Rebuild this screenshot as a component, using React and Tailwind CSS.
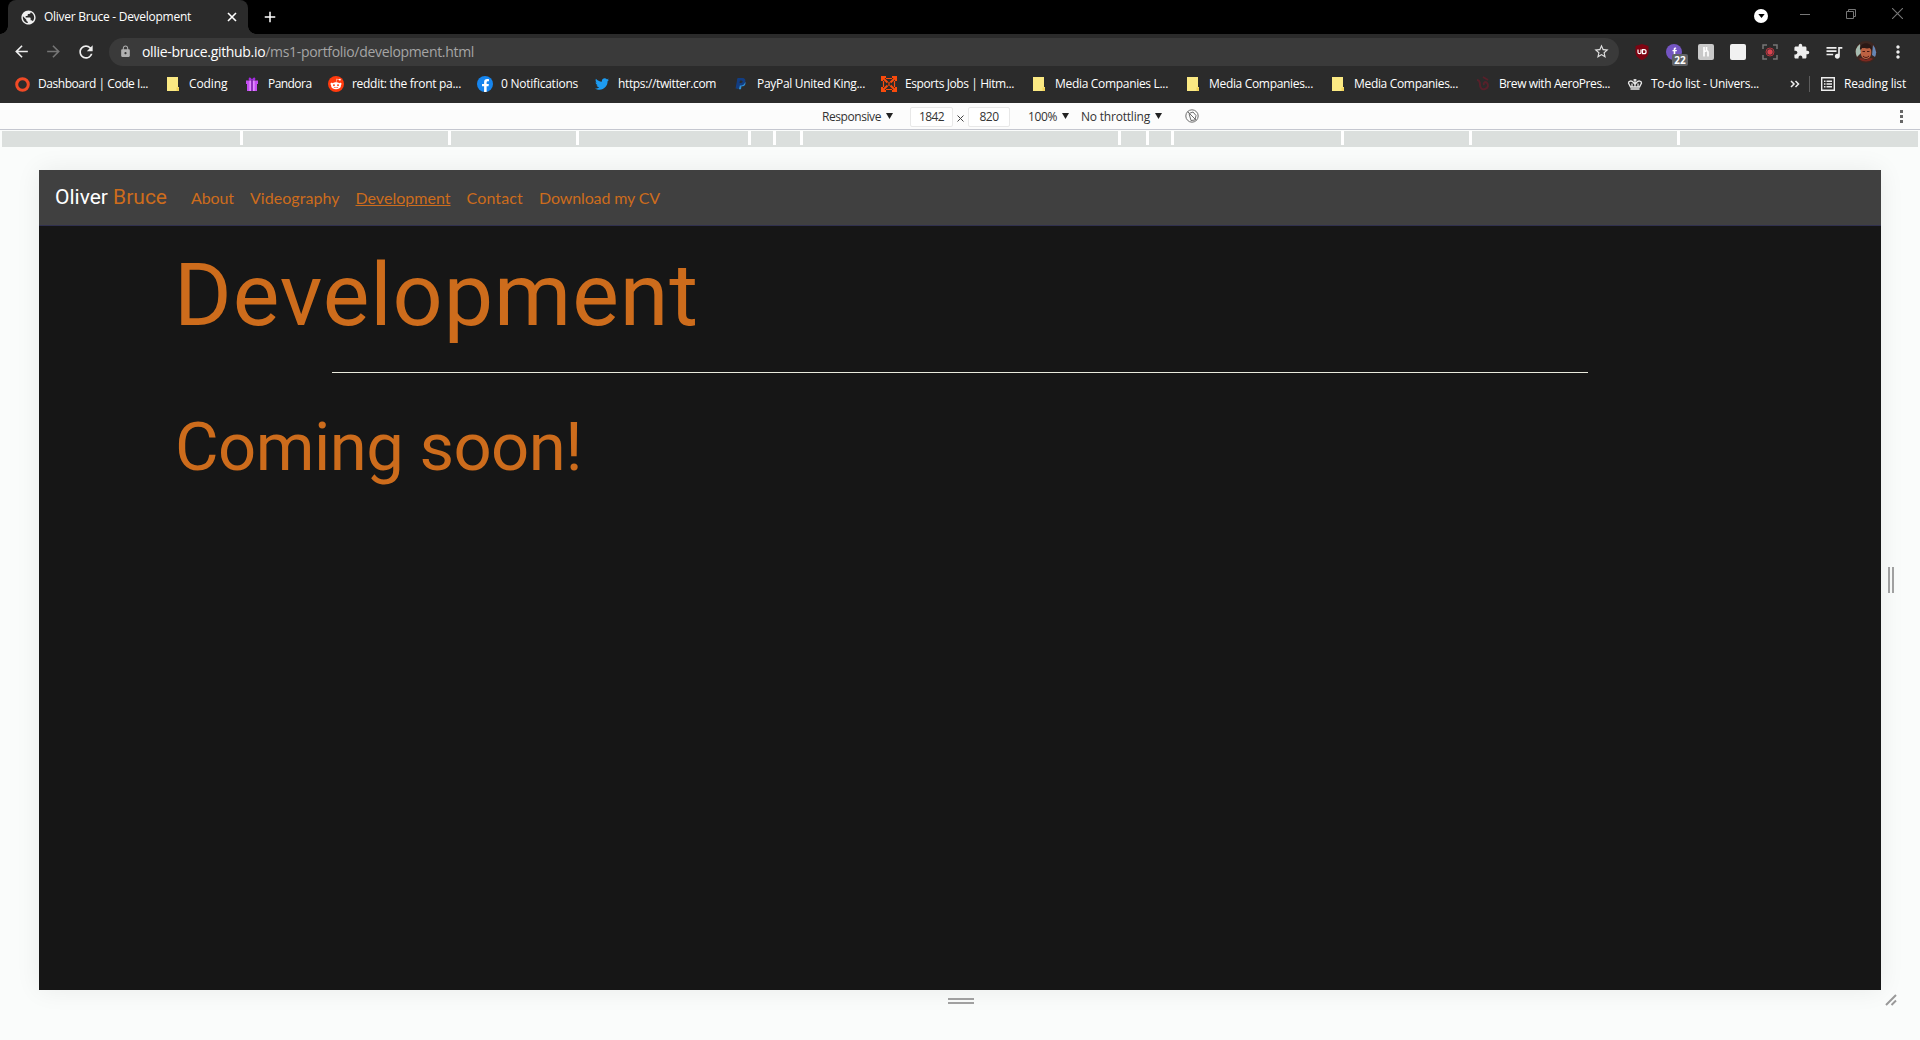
import { useLayoutEffect, useRef, useState } from 'react';
import { MdStarBorder, MdExtension, MdQueueMusic, MdMoreVert, MdArrowBack, MdArrowForward, MdRefresh, MdLock, MdPublic, MdAdd } from 'react-icons/md';
import { FaRedditAlien, FaTwitter, FaPaypal, FaFacebookF } from 'react-icons/fa';

// Text whose tracking is computed so that it fills the given width.
function Fit({ w, className = '', children }) {
  const ref = useRef(null);
  const [spacing, setSpacing] = useState(0);
  useLayoutEffect(() => {
    const measure = () => {
      const el = ref.current;
      if (!el) return;
      el.style.letterSpacing = '0px';
      const s = (w - el.getBoundingClientRect().width) / el.textContent.length;
      el.style.letterSpacing = `${s}px`;
      setSpacing(s);
    };
    measure();
    document.fonts?.ready.then(measure);
  }, [w]);
  return (
    <span ref={ref} className={`inline-block shrink-0 whitespace-nowrap ${className}`} style={{ letterSpacing: `${spacing}px` }}>
      {children}
    </span>
  );
}

function Folder() {
  return (
    <svg viewBox="0 0 16 16" className="size-4">
      <path d="M1 1h11v10h1v4H1z" fill="#fbe983" />
      <path d="M10.5 11.500h2.500V15h-2.500z" fill="#f3d55b" />
    </svg>
  );
}

const icons = {
  code: (
    <svg viewBox="0 0 16 16" className="size-4">
      <circle cx="8.500" cy="8.500" r="5.800" fill="none" stroke="#f04a26" strokeWidth="3" />
    </svg>
  ),
  folder: <Folder />,
  gift: (
    <svg viewBox="0 0 16 16" className="size-4">
      <path d="M2 4.500h12V8H2zM3 8h10v7H3z" fill="#c44df2" />
      <path d="M5 2c1-1 2.500 0 3 2 .5-2 2-3 3-2s0 2.500-1 2.500H6C5 4.500 4 3 5 2z" fill="#a32be0" />
      <path d="M5.500 4.500h1.300V15H5.500zM9.200 4.500h1.300V15H9.200z" fill="#e79bff" />
      <path d="M7.500 4.500h1V15h-1z" fill="#5b1086" />
    </svg>
  ),
  reddit: (
    <span className="flex size-4 items-center justify-center rounded-full bg-[#ff3a0d] text-white">
      <FaRedditAlien size={12} />
    </span>
  ),
  facebook: (
    <span className="flex size-4 items-end justify-center rounded-full bg-[#1685ee] text-white">
      <FaFacebookF size={13} />
    </span>
  ),
  twitter: <FaTwitter size={14} className="text-[#1d9bf0]" />,
  paypal: (
    <span className="relative flex size-4 items-center justify-center text-[#2f8fd6]">
      <FaPaypal size={12} />
      <svg viewBox="0 0 16 16" className="absolute inset-0 size-4"><path d="M4.500 2H9c3 0 4 2 3 4.500S9.500 9.500 6.500 9.500L6 12.500H2.500z" fill="#123d82" /><path d="M7 4.500h1.500c1.200 0 1.300.8 1 1.500S8.500 7 6.500 7z" fill="#2b2b2b" /></svg>
    </span>
  ),
  hitmarker: (
    <svg viewBox="0 0 16 16" className="size-4" fill="none" stroke="#fa4b0c" strokeWidth="2">
      <path d="M1 5V1h4M11 1h4v4M15 11v4h-4M5 15H1v-4" />
      <path d="M2 2l4.500 4.500M14 2L9.500 6.500M2 14l4.500-4.500M14 14L9.500 9.500" />
      <path d="M5 2.500h6M5 13.500h6M2.500 5v6M13.500 5v6M8 6v4" strokeWidth="1.200" />
    </svg>
  ),
  aeropress: (
    <svg viewBox="0 0 16 16" className="size-4" fill="none" stroke="#57202a" strokeWidth="2">
      <path d="M2 4c2 0 3 2 3 5s2 5 5 4 4-4 2-6-4 0-3 2M8 1l5 3" />
    </svg>
  ),
  crown: (
    <svg viewBox="0 0 16 16" className="size-4" fill="none" stroke="#e9e9e9" strokeWidth="1.300">
      <path d="M3.500 13h9M3.500 11L1.500 7c0-2 3-3 5-.5L8 8.500l1.500-2c2-2.500 5-1.500 5 .5l-2 4zM8 3v5.500M6.500 4h3M5 7.500V11M11 7.500V11M8 8.500V11" />
    </svg>
  ),
};

const bookmarks = [
  { icon: 'code', label: 'Dashboard | Code I...', tw: 110, box: 'w-[152px]' },
  { icon: 'folder', label: 'Coding', tw: 38.5, box: 'w-[78px]', tight: true },
  { icon: 'gift', label: 'Pandora', tw: 43.5, box: 'w-[84px]' },
  { icon: 'reddit', label: 'reddit: the front pa...', tw: 109, box: 'w-[149px]' },
  { icon: 'facebook', label: '0 Notifications', tw: 77, box: 'w-[117px]' },
  { icon: 'twitter', label: 'https://twitter.com', tw: 98, box: 'w-[139px]' },
  { icon: 'paypal', label: 'PayPal United King...', tw: 108, box: 'w-[148px]' },
  { icon: 'hitmarker', label: 'Esports Jobs | Hitm...', tw: 109, box: 'w-[151px]' },
  { icon: 'folder', label: 'Media Companies L...', tw: 113, box: 'w-[154px]', tight: true },
  { icon: 'folder', label: 'Media Companies...', tw: 104, box: 'w-[145px]', tight: true },
  { icon: 'folder', label: 'Media Companies...', tw: 104, box: 'w-[144px]', tight: true },
  { icon: 'aeropress', label: 'Brew with AeroPres...', tw: 111, box: 'w-[152px]' },
  { icon: 'crown', label: 'To-do list - Univers...', tw: 108, box: 'w-[158px]' },
];

function TabStrip() {
  return (
    <div className="flex h-[34px] items-start bg-black">
      <div className="relative ml-2 flex h-[34px] w-[240px] items-center rounded-t-lg bg-[#2b2b2b] pl-3">
        <span className="absolute bottom-0 -left-2 size-2 bg-[radial-gradient(circle_at_0_0,#000_7.5px,#2b2b2b_8px)]" />
        <span className="absolute -right-2 bottom-0 size-2 bg-[radial-gradient(circle_at_100%_0,#000_7.5px,#2b2b2b_8px)]" />
        <MdPublic size={17} className="text-[#f0f0f0]" />
        <Fit w={147} className="ml-[7px] text-white">Oliver Bruce - Development</Fit>
        <svg viewBox="0 0 10 10" className="ml-[36px] size-[10px]" stroke="#ffffff" strokeWidth="1.600"><path d="M1 1l8 8M9 1L1 9" /></svg>
      </div>
      <MdAdd size={18} className="mt-2 ml-[13px] text-white" />
      <div className="ml-auto flex items-center">
        <span className="mt-[9px] mr-[32px] flex size-[14px] items-center justify-center rounded-full bg-white">
          <svg viewBox="0 0 8 5" className="h-[4px] w-[7px]"><path d="M0 0h8L4 5z" fill="#000" /></svg>
        </span>
        <svg viewBox="0 0 10 10" className="mt-[4px] mr-[36px] size-[10px]" stroke="#777777"><path d="M0 5.500h10" /></svg>
        <svg viewBox="0 0 10 10" className="mt-[4px] mr-[36px] size-[10px]" fill="none" stroke="#777777">
          <path d="M.5 2.500h7v7h-7zM2.500 2.500v-2h7v7h-2" />
        </svg>
        <svg viewBox="0 0 10 10" className="mt-[4px] mr-[17px] size-[11px]" stroke="#777777"><path d="M0 0l10 10M10 0L0 10" /></svg>
      </div>
    </div>
  );
}

function AddressBar() {
  return (
    <div className="flex h-[35px] items-center bg-[#2b2b2b]">
      <MdArrowBack size={19} className="ml-[12px] text-[#eeeeee]" />
      <MdArrowForward size={19} className="ml-[13px] text-[#757575]" />
      <MdRefresh size={20} className="ml-[13px] text-[#eeeeee]" />
      <div className="ml-[13px] flex h-7 w-[1510px] items-center rounded-full bg-[#3a3a3a] pl-[10px]">
        <MdLock size={13} className="text-[#b0b0b0]" />
        <Fit w={332} className="ml-[10px] text-[14px] leading-5 text-[#a5a5a5]">
          <span className="text-white">ollie-bruce.github.io</span>/ms1-portfolio/development.html
        </Fit>
        <MdStarBorder size={17} className="mr-[9px] ml-auto text-[#e0e0e0]" />
      </div>
      <svg viewBox="0 0 16 16" className="ml-[15px] size-4">
        <path d="M8 0l6.500 2v6c0 4-3 6.500-6.500 8C4.500 14.500 1.500 12 1.500 8V2z" fill="#7d0412" />
        <path d="M4 5.500v3c0 1.500 3 1.500 3 0v-3M8.500 5.700h1.700c2.500 0 2.500 4 0 4H8.500z" fill="none" stroke="#fff" strokeWidth="1.200" />
      </svg>
      <span className="relative ml-4 flex size-4 items-center justify-center rounded-full bg-[#7455c2]">
        <svg viewBox="0 0 16 16" className="size-4"><path d="M10 3.500c-2-.5-2.500.8-2.300 2.500H6.500v1.200h1.200V12h1.600V7.200h1.500V6H9.300c0-1 0-1.300 1-1.200z" fill="#fff" /></svg>
        <span className="absolute top-[10px] left-[6px] flex h-3 w-4 items-center justify-center rounded-[2px] bg-[#5f6165] text-[10px] leading-none font-bold text-white">22</span>
      </span>
      <span className="ml-4 flex size-4 items-center justify-center rounded-[2px] bg-[#c9c9c9]">
        <svg viewBox="0 0 16 16" className="size-4" fill="none" stroke="#fff" strokeWidth="1.600"><path d="M6 3v9.500M6.500 7.500c3-1.500 3.500-.5 3.500 1v4M8.500 3v3" /></svg>
      </span>
      <span className="ml-4 flex size-4 rounded-[2px] bg-[#f1f1f1]" />
      <svg viewBox="0 0 16 16" className="ml-4 size-4" fill="none" stroke="#777777" strokeWidth="1.500">
        <path d="M1 5V1h4M11 1h4v4M15 11v4h-4M5 15H1v-4" />
        <circle cx="8" cy="8" r="4" stroke="#b5343d" strokeWidth="1" />
        <circle cx="8" cy="8" r="2.700" fill="#d94350" stroke="none" />
      </svg>
      <MdExtension size={17} className="ml-[15px] text-[#eeeeee]" />
      <MdQueueMusic size={20} className="ml-[14px] text-[#eeeeee]" />
      <svg viewBox="0 0 22 22" className="ml-[11px] size-[22px]">
        <circle cx="11" cy="11" r="11" fill="#3c2620" />
        <path d="M1 8a11 11 0 0 1 4-5l1 9-4 4a11 11 0 0 1-1-8z" fill="#a6bcb0" />
        <path d="M18 4a11 11 0 0 1 2 12l-3-2z" fill="#6687b5" />
        <path d="M6 9c0-4 10-4 10 0 1 5-1 9-5 9s-6-4-5-9z" fill="#bd6242" />
        <path d="M5 9c-1-9 13-9 12 0l-2-2c-3 1-6 0-8 0z" fill="#2a1815" />
        <path d="M7.500 10.500h2.500M12 10.500h2.500M8 15c2 2 4 2 6 0" stroke="#4a1a14" fill="none" />
        <path d="M4 18c2-2 3-1 7 1 3-2 5-3 7-1a11 11 0 0 1-14 0z" fill="#7d2920" />
      </svg>
      <MdMoreVert size={20} className="ml-[11px] text-[#eeeeee]" />
    </div>
  );
}

function BookmarksBar() {
  return (
    <div className="flex h-[34px] items-center bg-[#2b2b2b] pb-[4px] pl-[14px] text-white">
      {bookmarks.map((b, i) => (
        <div key={i} className={`flex shrink-0 items-center ${b.box}`}>
          <span className="flex w-4 shrink-0 justify-center">{icons[b.icon]}</span>
          <Fit w={b.tw} className={b.tight ? 'ml-[7px]' : 'ml-2'}>{b.label}</Fit>
        </div>
      ))}
      <svg viewBox="0 0 10 8" className="ml-[5px] h-2 w-[10px]" fill="none" stroke="#eeeeee" strokeWidth="1.500"><path d="M1 1l3 3-3 3M5.500 1l3 3-3 3" /></svg>
      <span className="ml-[9px] h-4 w-px bg-[#5c5c5c]" />
      <svg viewBox="0 0 14 14" className="ml-[11px] size-[14px]" fill="none" stroke="#eeeeee" strokeWidth="1.400">
        <path d="M.7.7h12.600v12.600H.7zM3 4.200h1.500M3 7h1.500M3 9.800h1.500M5.500 4.200H11M5.500 7H11M5.500 9.800H11" />
      </svg>
      <Fit w={62} className="ml-[9px]">Reading list</Fit>
    </div>
  );
}

function Caret({ className }) {
  return <svg viewBox="0 0 7 6" className={`h-[6px] w-[7px] ${className}`}><path d="M0 0h7L3.500 6z" fill="#222" /></svg>;
}

function DeviceToolbar() {
  return (
    <div className="flex h-[27px] items-center border-b border-[#c5c7d0] bg-[#fcfcfc] pt-px pl-[822px] text-[#333]">
      <Fit w={59}>Responsive</Fit>
      <Caret className="mb-[2px] ml-[5px]" />
      <div className="ml-[17px] flex h-5 w-[43px] items-center justify-center rounded-[2px] border border-[#e8e8e8] bg-white"><Fit w={25}>1842</Fit></div>
      <svg viewBox="0 0 7 7" className="mx-[4px] mt-[3px] size-[7px]" stroke="#444"><path d="M.5.500l6 6M6.500.500l-6 6" /></svg>
      <div className="flex h-5 w-[42px] items-center justify-center rounded-[2px] border border-[#e8e8e8] bg-white"><Fit w={19}>820</Fit></div>
      <Fit w={29} className="ml-[18px]">100%</Fit>
      <Caret className="mb-[2px] ml-[5px]" />
      <Fit w={69} className="ml-[12px]">No throttling</Fit>
      <Caret className="mb-[2px] ml-[5px]" />
      <svg viewBox="0 0 14 14" className="mb-[2px] ml-[23px] size-[14px]" fill="none" stroke="#6e6e6e">
        <circle cx="7" cy="7" r="6.200" />
        <path d="M2.600 2.600l8.800 8.800M4 4.500l4-1.500 3 3.500-1 4.500-4 .5z" />
      </svg>
      <svg viewBox="0 0 3 13" className="mr-[17px] ml-auto h-[13px] w-[3px]" fill="#666"><path d="M0 0h3v3H0zM0 5h3v3H0zM0 10h3v3H0z" /></svg>
    </div>
  );
}

// Widths of the media-query ruler between its white ticks.
const rulerSegments = ['w-[238px]', 'w-[205px]', 'w-[125px]', 'w-[169px]', 'w-[22px]', 'w-[24px]', 'w-[315px]', 'w-[25px]', 'w-[22px]', 'w-[167px]', 'w-[125px]', 'w-[205px]'];

function Ruler() {
  return (
    <div className="mx-[2px] mt-px flex h-4 overflow-hidden bg-[#dbdfdd]">
      {rulerSegments.map((w, i) => (
        <div key={i} className="flex shrink-0">
          <span className={w} />
          <span className="h-[14px] w-[3px] bg-white" />
        </div>
      ))}
    </div>
  );
}

const links = [
  { label: 'About', w: 43 },
  { label: 'Videography', w: 89.5 },
  { label: 'Development', w: 95, active: true },
  { label: 'Contact', w: 56.5 },
  { label: 'Download my CV', w: 121 },
];

function Site() {
  return (
    <div className="h-[820px] w-[1842px] bg-[#161616] text-[#cd6c1c] shadow-[0_0_24px_rgba(0,0,0,0.07)]">
      <nav className="flex h-[56px] items-center border-b border-[#30304e] bg-[#404040] pl-4">
        <Fit w={112} className="pb-px font-['Roboto',sans-serif] text-[21px] leading-7">
          <span className="text-white">Oliver</span> Bruce
        </Fit>
        <div className="ml-6 flex gap-4 font-['Lato',sans-serif] text-[16px] leading-6">
          {links.map((l) => (
            <Fit key={l.label} w={l.w} className={l.active ? 'underline' : ''}>{l.label}</Fit>
          ))}
        </div>
      </nav>
      <main className="px-[135px] font-['Roboto',sans-serif]">
        <h1 className="flex h-[146px] items-center pb-[9px] text-[88px] leading-[106px]"><Fit w={525}>Development</Fit></h1>
        <hr className="mx-auto w-[1256px] border-0 border-t border-[#e9eadd]" />
        <h2 className="flex h-[148px] items-center pl-px text-[67px] leading-[80px]"><Fit w={407}>Coming soon!</Fit></h2>
      </main>
    </div>
  );
}

export default function App() {
  return (
    <div className="flex h-[1040px] w-[1920px] flex-col overflow-hidden bg-[#fafcfb] font-['Open_Sans',sans-serif] text-[12px] leading-4">
      <TabStrip />
      <AddressBar />
      <BookmarksBar />
      <DeviceToolbar />
      <Ruler />
      <div className="mt-[23px] ml-[39px] flex items-center">
        <Site />
        <div className="ml-[7px] flex h-[26px] w-[6px] justify-between border-x-2 border-[#a0a0a0]" />
      </div>
      <div className="mt-[8px] flex w-[1920px] items-start">
        <div className="ml-[948px] h-[6px] w-[26px] border-y-2 border-[#a0a0a0]" />
        <svg viewBox="0 0 12 12" className="mt-[-4px] mr-[23px] ml-auto size-3" stroke="#999999" strokeWidth="2"><path d="M1 11L11 1M6.500 11L11 6.500" /></svg>
      </div>
    </div>
  );
}
